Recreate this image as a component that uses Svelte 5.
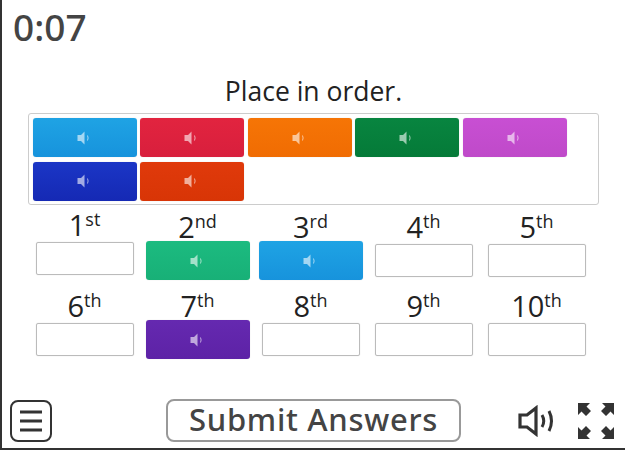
<script>
  const tray = [
    'blue', 'red', 'orange', 'green', 'magenta', 'navy', 'rust'
  ];

  const slots = [
    { n: 1, suffix: 'st', raised: true },
    { n: 2, suffix: 'nd', tile: 'teal' },
    { n: 3, suffix: 'rd', tile: 'blue' },
    { n: 4, suffix: 'th' },
    { n: 5, suffix: 'th' },
    { n: 6, suffix: 'th' },
    { n: 7, suffix: 'th', tile: 'purple' },
    { n: 8, suffix: 'th' },
    { n: 9, suffix: 'th' },
    { n: 10, suffix: 'th' }
  ];
</script>

{#snippet tile(color)}
  <div class="tile {color}">
    <svg width="14" height="14" viewBox="0 0 14 14" aria-hidden="true">
      <path d="M0.500 4h3.500L7.500 0.500v13L4 10H0.500z" fill="#fff" fill-opacity="0.6" />
      <path d="M10.500 4.500q1.200 2.500 0 5" fill="none" stroke="#fff" stroke-opacity="0.6" />
    </svg>
  </div>
{/snippet}

<div class="screen">
  <div class="timer">0:07</div>
  <h1>Place in order.</h1>

  <div class="tray">
    {#each tray as color}
      {@render tile(color)}
    {/each}
  </div>

  <div class="slots">
    {#each slots as slot}
      <div class="cell" class:raised={slot.raised}>
        <div class="label">{slot.n}<sup>{slot.suffix}</sup></div>
        <div class="holder">
          {#if slot.tile}
            {@render tile(slot.tile)}
          {:else}
            <div class="empty"></div>
          {/if}
        </div>
      </div>
    {/each}
  </div>

  <div class="toolbar">
    <button class="menu" aria-label="Menu">
      <svg width="22" height="22" viewBox="0 0 22 22">
        <path d="M0 2h22M0 11h22M0 20h22" stroke="#333" stroke-width="3" />
      </svg>
    </button>
    <button class="submit">Submit Answers</button>
    <div class="tools">
      <svg width="36" height="32" viewBox="0 0 36 32" aria-label="Sound">
        <path d="M2 10h7l9-7v26l-9-7H2z" fill="none" stroke="#333" stroke-width="3.200" />
        <path d="M24 10q3.500 6 0 12M31 6q5 10 0 20" fill="none" stroke="#333" stroke-width="3" />
      </svg>
      <svg width="36" height="36" viewBox="0 0 36 36" aria-label="Fullscreen">
        <g fill="#333">
          <path d="M0 0h12L8.500 3.500 13 8l-5 5-4.500-4.500L0 12z" />
          <path d="M36 0v12l-3.500-3.500L28 13l-5-5 4.500-4.500L24 0z" />
          <path d="M0 36V24l3.500 3.500L8 23l5 5-4.500 4.500L12 36z" />
          <path d="M36 36H24l3.500-3.500L23 28l5-5 4.500 4.500L36 24z" />
        </g>
      </svg>
    </div>
  </div>
</div>

<style>
  :global(body) {
    margin: 0;
    background: #fff;
    font-family: "Open Sans", "Noto Sans", sans-serif;
    color: #222;
  }

  .screen {
    box-sizing: border-box;
    width: 625px;
    height: 450px;
    border-left: 2px solid #333;
    border-bottom: 2px solid #333;
    display: flex;
    flex-direction: column;
  }

  .timer {
    font-family: "Noto Sans", sans-serif;
    font-size: 37px;
    font-weight: 500;
    line-height: 44px;
    margin: 5px 0 0 11px;
    color: #444;
  }

  h1 {
    margin: 25px 0 0;
    font-size: 26.500px;
    font-weight: 400;
    line-height: 34px;
    text-align: center;
    color: #222;
  }

  .tray {
    box-sizing: border-box;
    width: 571px;
    height: 92px;
    margin: 5px 0 0 26px;
    padding: 4px 4px 4px 3.800px;
    border: 1px solid #ccc;
    border-radius: 3px;
    display: flex;
    flex-wrap: wrap;
    align-content: flex-start;
    gap: 4.500px 3.500px;
  }

  .tile {
    box-sizing: border-box;
    width: 104px;
    height: 39px;
    border-radius: 3px;
    display: flex;
    align-items: center;
    justify-content: center;
    box-shadow: 0 0 1px rgba(0, 0, 0, 0.2);
  }

  .tile svg {
    margin-right: 2px;
  }

  .blue { background: linear-gradient(#1fa3e4, #1793dc); }
  .red { background: linear-gradient(#e2243f, #d81f3d); }
  .orange { background: linear-gradient(#f67506, #f06c02); }
  .green { background: linear-gradient(#088540, #057a38); }
  .magenta { background: linear-gradient(#c84fd3, #bf4ac9); }
  .navy { background: linear-gradient(#1b36c6, #1529b4); }
  .rust { background: linear-gradient(#e03a0b, #d83506); }
  .teal { background: linear-gradient(#1cbb80, #18b077); }
  .purple { background: linear-gradient(#6529b0, #5d22a6); }

  .slots {
    display: grid;
    grid-template-columns: repeat(5, 113px);
    grid-auto-rows: 79px;
    margin: 9px 0 0 26px;
  }

  .cell {
    display: flex;
    flex-direction: column;
    align-items: center;
  }

  .raised {
    transform: translateY(-2px);
  }

  .label {
    height: 27px;
    font-size: 29px;
    line-height: 26px;
    white-space: nowrap;
  }

  sup {
    font-size: 18px;
    line-height: 0;
    vertical-align: 10px;
  }

  .holder {
    height: 39px;
    display: flex;
    align-items: center;
  }

  .empty {
    box-sizing: border-box;
    width: 98px;
    height: 33px;
    border: 1px solid #bbb;
    border-radius: 2px;
    box-shadow: 0 0 1px rgba(0, 0, 0, 0.2);
  }

  .toolbar {
    margin-top: auto;
    height: 43px;
    margin-bottom: 6px;
    display: flex;
    align-items: center;
  }

  button {
    background: #fff;
    padding: 0;
    font: inherit;
  }

  .menu {
    width: 42px;
    height: 42px;
    margin-left: 8px;
    border: 2px solid #333;
    border-radius: 8px;
    display: flex;
    align-items: center;
    justify-content: center;
  }

  .submit {
    box-sizing: border-box;
    width: 295px;
    height: 43px;
    margin-left: 114px;
    padding-bottom: 6px;
    border: 2px solid #999;
    border-radius: 8px;
    font-family: "Noto Sans", sans-serif;
    font-size: 31px;
    font-weight: 500;
    letter-spacing: 0.700px;
    color: #444;
    line-height: 36px;
  }

  .tools {
    display: flex;
    align-items: center;
    gap: 24px;
    margin-left: 57px;
  }
</style>
